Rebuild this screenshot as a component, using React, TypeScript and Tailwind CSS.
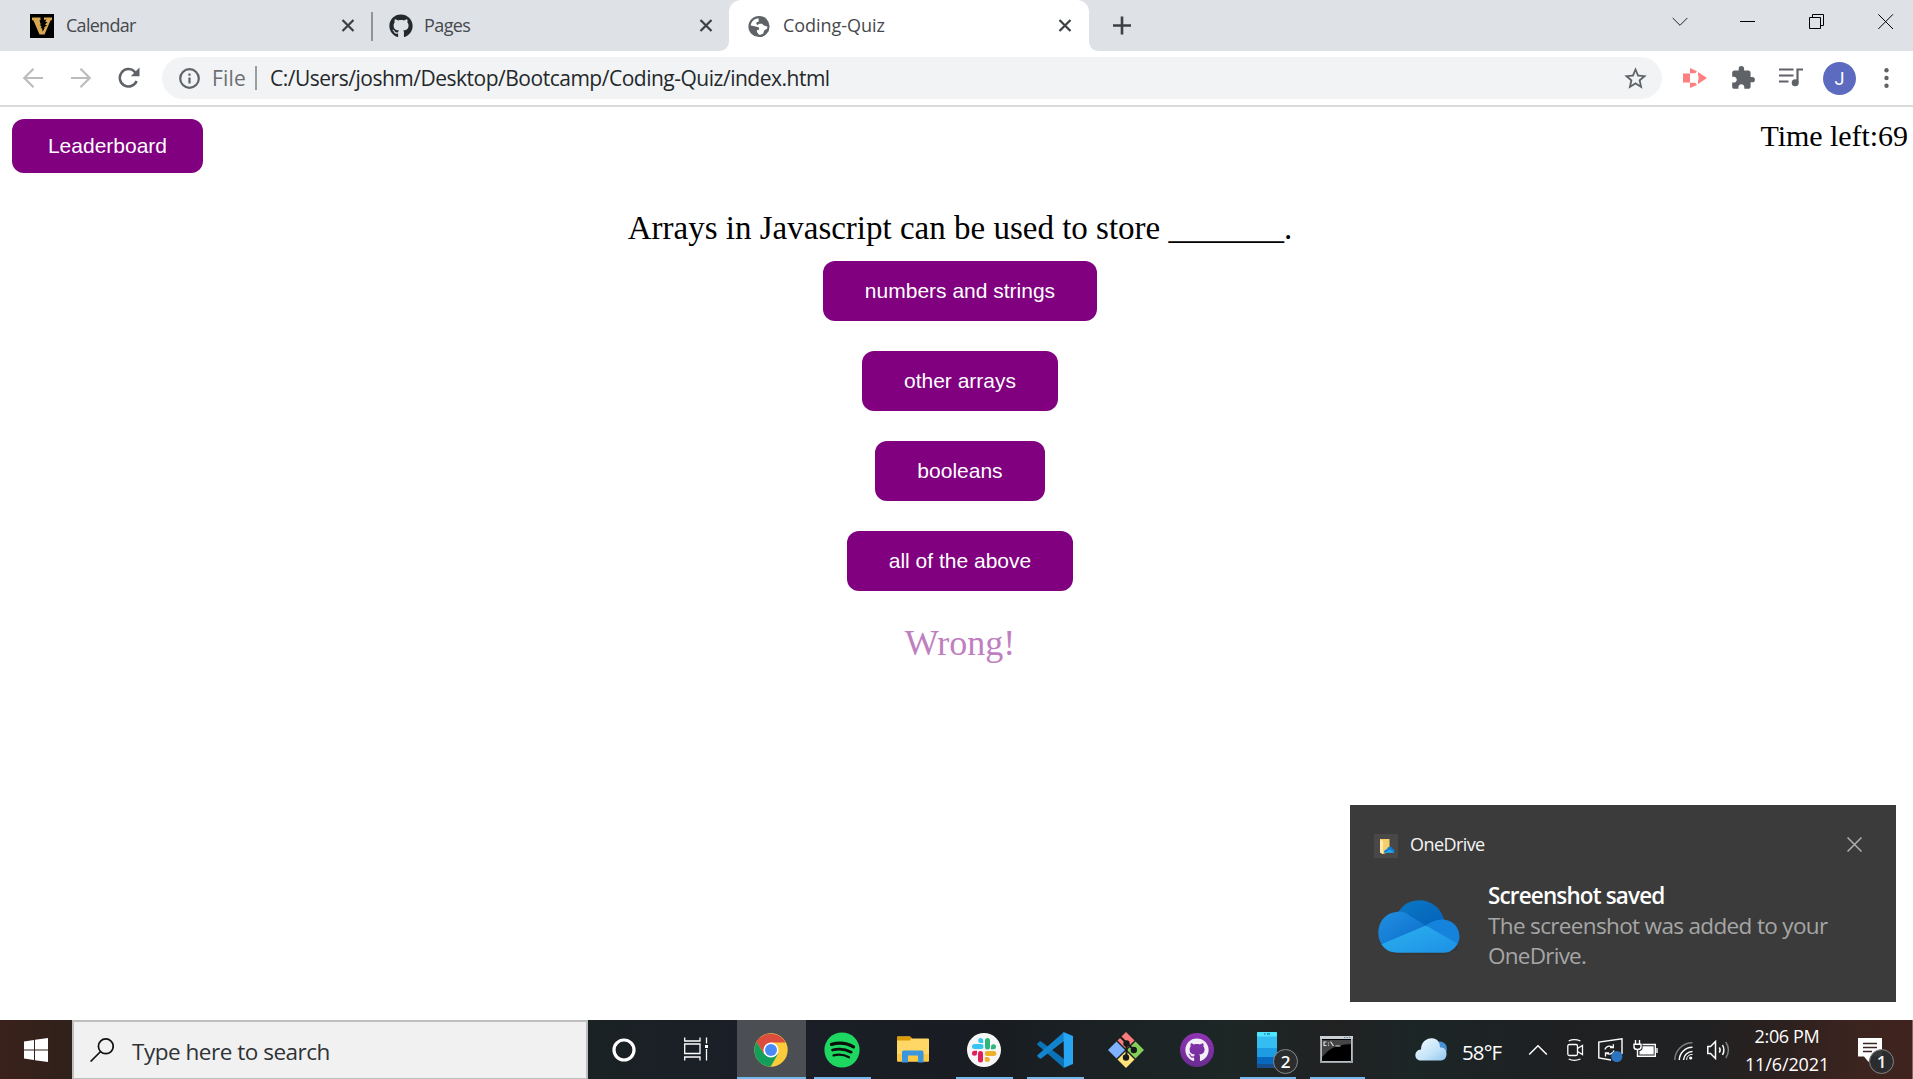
import type { ReactNode } from "react";
import { FaGithub } from "react-icons/fa";
import { MdExtension, MdStarBorder } from "react-icons/md";

const UI = "font-['Open_Sans','Noto_Sans',sans-serif]";

function CloseGlyph() {
  return (
    <svg className="h-3.5 w-3.5 shrink-0" viewBox="0 0 14 14" stroke="#3c4043" strokeWidth="2.2" fill="none">
      <path d="M1.5 1 12.5 12M12.5 1 1.5 12" />
    </svg>
  );
}

function VFavicon() {
  return (
    <svg className="h-6 w-6 shrink-0" viewBox="0 0 24 24">
      <rect width="24" height="24" fill="#000" />
      <path d="M2 3.500H10.500V6L9.500 6.500 13 17 14.500 14 13 12.500 15 12 13.500 9.500 16 9.500 15 6.500 14 5.500V3.500H22V6L20.500 6.500 14.500 20.500H9.500L3.500 6.500 2 6Z" fill="#d8a851" />
      <path d="M12.500 3.500 11 6 12.500 7.500 10 8.500 12 10 9.500 11 12 12.500 10.500 14 12.500 14.500 12.500 18 14.500 13 17 11.500 15 10.500 17.500 8 15 8 16.500 5.500 14 6Z" fill="#000" />
    </svg>
  );
}

function GlobeFavicon() {
  return (
    <svg className="h-6 w-6 shrink-0" viewBox="0 0 24 24">
      <circle cx="12" cy="12.500" r="10.600" fill="#5f6368" />
      <path d="M11.500 4.300C7.500 4.500 4.200 7.500 3.700 11.500L7.500 12.300 11.500 13.200 12 15.500 9.800 16 9.800 18 12 20.700C13.500 20.700 15 20.200 16.200 19.400L17.200 16.500 20.200 14.500 20.300 12.500 17 11.500 15 9.800 12.300 9.800 10.500 11 9.300 10 9.600 8.300 11.800 7.600Z" fill="#fff" />
      <path d="M4 13.500 8 13.800 11.500 13.200 12 15.500 9.800 16 9.800 18 11 20.500 5.800 18Z" fill="#5f6368" />
    </svg>
  );
}

function TabStrip() {
  return (
    <div className={`flex h-[51px] bg-[#dee1e6] text-[18px] leading-6 text-[#45494d] ${UI}`}>
      <div className="flex w-[371px] items-center pr-[16px] pl-[30px]">
        <VFavicon />
        <span className="mb-[2px] ml-[12px] flex-1 tracking-[-0.72px]">Calendar</span>
        <CloseGlyph />
      </div>
      <div className="mt-3 h-[29px] w-[2px] bg-[#909397]" />
      <div className="flex w-[356px] items-center pr-[16px] pl-[16px]">
        <FaGithub className="h-6 w-6 text-[#24292e]" />
        <span className="mb-[2px] ml-[11px] flex-1 tracking-[-0.6px]">Pages</span>
        <CloseGlyph />
      </div>
      <div className="relative flex w-[360px] items-center rounded-t-xl bg-white pr-[17px] pl-[18px]">
        <svg className="absolute bottom-0 -left-2.5 h-2.5 w-2.5" viewBox="0 0 10 10">
          <path d="M10 0V10H0C6 10 10 6 10 0Z" fill="#fff" />
        </svg>
        <svg className="absolute -right-2.5 bottom-0 h-2.5 w-2.5" viewBox="0 0 10 10">
          <path d="M0 0V10H10C4 10 0 6 0 0Z" fill="#fff" />
        </svg>
        <GlobeFavicon />
        <span className="mb-[2px] ml-[12px] flex-1 tracking-[-0.05px]">Coding-Quiz</span>
        <CloseGlyph />
      </div>
      <svg className="mt-4 ml-[23px] h-[19px] w-[20px]" viewBox="0 0 20 19" stroke="#3c4043" strokeWidth="2.600">
        <path d="M1 9.500H19M10 .5V18.500" />
      </svg>
      <div className="flex-1" />
      <div className="flex items-start pt-3.5 pr-[19px]">
        <svg className="h-4 w-4" viewBox="0 0 16 16" fill="none" stroke="#222">
          <path d="M.7 4 8 11.300 15.300 4" />
        </svg>
        <svg className="ml-[52px] h-4 w-4" viewBox="0 0 16 16" stroke="#000">
          <path d="M0 7.500H15" />
        </svg>
        <svg className="ml-[53px] h-4 w-4" viewBox="0 0 16 16" fill="none" stroke="#000">
          <path d="M.5 3.500H11.500V14.500H.5ZM3.500 3.500V.5H14.500V11.500H11.500" />
        </svg>
        <svg className="ml-[53px] h-4 w-4" viewBox="0 0 16 16" fill="none" stroke="#000">
          <path d="M.3 .3 15 15M15 .3 .3 15" />
        </svg>
      </div>
    </div>
  );
}

function Toolbar() {
  return (
    <div className={`flex h-14 items-center border-b-2 border-[#dadadb] bg-white ${UI}`}>
      <svg className="ml-[22px] h-[22px] w-[22px]" viewBox="0 0 22 22" fill="none" stroke="#babcbe" strokeWidth="2.200">
        <path d="M21 11H2.500M11.500 1.800 2.300 11 11.500 20.200" />
      </svg>
      <svg className="ml-[26px] h-[22px] w-[22px]" viewBox="0 0 22 22" fill="none" stroke="#babcbe" strokeWidth="2.200">
        <path d="M1 11H19.500M10.500 1.800 19.700 11 10.500 20.200" />
      </svg>
      <svg className="ml-[26px] h-[22px] w-[22px]" viewBox="0 0 22 22">
        <path d="M18.600 14A8.700 8.700 0 1 1 16.800 4.800L18 6" fill="none" stroke="#5f6368" strokeWidth="2.500" />
        <path d="M21.500 .6V9.200H12.800Z" fill="#5f6368" />
      </svg>
      <div className="ml-[22px] flex h-[42px] w-[1500px] items-center rounded-full bg-[#f1f3f4] pr-[13px] pl-[17px] text-[21px] leading-7">
        <svg className="h-[21px] w-[21px]" viewBox="0 0 21 21">
          <circle cx="10.500" cy="10.500" r="9.300" fill="none" stroke="#5f6368" strokeWidth="2.200" />
          <path d="M9.400 9.500H11.600V15.500H9.400ZM9.400 5.500H11.600V7.700H9.400Z" fill="#5f6368" />
        </svg>
        <span className="ml-[12px] w-[43px] tracking-[0.15px] text-[#6b6f74]">File</span>
        <div className="h-6 w-[2px] bg-[#9a9da1]" />
        <span className="ml-[13px] flex-1 tracking-[-0.49px] text-[#25282b]">
          C:/Users/joshm/Desktop/Bootcamp/Coding-Quiz/index.html
        </span>
        <MdStarBorder className="h-[27px] w-[27px] text-[#5f6368]" />
      </div>
      <svg className="ml-[21px] h-5 w-6" viewBox="0 0 24 20" fill="#ff7f7f">
        <path d="M0 5.500H7V14.500H0ZM7 0 14 3.200 12 5.500H7ZM15 4 24 10 15 16ZM7 20V14.500H12L14 17ZM8 6.500V13.500H7V6.500Z" />
        <path d="M7 5.500H13.500L15.500 8V12L13.500 14.500H7Z" fill="#fff" />
      </svg>
      <MdExtension className="ml-[23px] h-[26px] w-[26px] text-[#5f6368]" />
      <svg className="ml-[23px] h-[22px] w-6" viewBox="0 0 24 22" fill="none" stroke="#5f6368" strokeWidth="2.200">
        <path d="M0 2.500H14.500M0 8.500H14.500M0 14.500H9.500M18.500 15.500V2.500H24" />
        <circle cx="16.200" cy="15.800" r="3.500" fill="#5f6368" stroke="none" />
      </svg>
      <div className="ml-[20px] flex h-[33px] w-[33px] items-center justify-center rounded-full bg-[#5c6bc0] font-['Roboto',sans-serif] text-[18px] text-white">
        J
      </div>
      <svg className="ml-[28px] h-5 w-[5px]" viewBox="0 0 5 20" fill="#5f6368">
        <circle cx="2.500" cy="2.200" r="2.200" />
        <circle cx="2.500" cy="10" r="2.200" />
        <circle cx="2.500" cy="17.800" r="2.200" />
      </svg>
    </div>
  );
}

const answers = ["numbers and strings", "other arrays", "booleans", "all of the above"];

function Quiz() {
  return (
    <main className="flex-1 bg-white font-['Liberation_Serif',serif] text-black">
      <div className="flex h-[102px] items-start justify-between pt-3 pr-[5px] pl-3">
        <button className="h-[54px] w-[191px] rounded-xl bg-[purple] font-['Liberation_Sans',sans-serif] text-[21px] leading-6 text-white">
          Leaderboard
        </button>
        <span className="text-[30px] leading-[34px] tracking-[-0.05px]">Time left:69</span>
      </div>
      <div className="flex flex-col items-center pl-[7px]">
        <p className="text-[33px] leading-[38px]">Arrays in Javascript can be used to store _______.</p>
        <div className="mt-[14px] flex flex-col items-center gap-[30px]">
          {answers.map((a) => (
            <button
              key={a}
              className="h-[60px] rounded-xl bg-[purple] px-[42px] font-['Liberation_Sans',sans-serif] text-[21px] leading-6 text-white"
            >
              {a}
            </button>
          ))}
        </div>
        <p className="mt-[31px] text-[36px] leading-[42px] text-[#c080c0]">Wrong!</p>
      </div>
    </main>
  );
}

function Toast() {
  return (
    <div className={`absolute right-[17px] bottom-[77px] h-[197px] w-[546px] bg-[#3b3b3b] ${UI}`}>
      <div className="flex h-[76px] items-center pt-[6px] pr-[34px] pl-6">
        <svg className="h-6 w-6" viewBox="0 0 24 24">
          <rect width="24" height="24" fill="#4a4846" />
          <path d="M6 5H15.500V18L9 20 6 18.500Z" fill="#f5cf6b" />
          <path d="M6 5 9 7V20L6 18.500Z" fill="#fde9a9" />
          <path d="M10 18.800C10 16 12 15.500 13 15.300 13.500 12 18 12 18.700 15 21 15 21 18.800 19 18.800Z" fill="#0f7fd4" />
          <path d="M10.500 18.800 16 15.800 20 18.500 19 18.800Z" fill="#29a9ea" />
        </svg>
        <span className="-mt-[4px] ml-[12px] flex-1 text-[18px] leading-6 tracking-[-0.58px] text-[#f5f5f5]">OneDrive</span>
        <svg className="-mt-[4px] h-[15px] w-[15px]" viewBox="0 0 15 15" stroke="#b0b0b0" strokeWidth="1.500">
          <path d="M.5 .5 14.500 14.500M14.500 .5 .5 14.500" />
        </svg>
      </div>
      <div className="flex pl-[28px]">
        <svg className="mt-[19px] h-14 w-[82px]" viewBox="0 0 83 56">
          <defs>
            <linearGradient id="cloudBack" x1="0" y1="0" x2="1" y2="1">
              <stop offset="0" stopColor="#0a78c4" />
              <stop offset="1" stopColor="#0460b8" />
            </linearGradient>
            <linearGradient id="cloudLeft" x1="0" y1="0" x2="1" y2="1">
              <stop offset="0" stopColor="#2090e0" />
              <stop offset="1" stopColor="#0c6ccc" />
            </linearGradient>
            <linearGradient id="cloudFront" x1="0" y1="0" x2="1" y2="1">
              <stop offset="0" stopColor="#2cb2ee" />
              <stop offset="1" stopColor="#1c90e6" />
            </linearGradient>
          </defs>
          <path d="M17 54.500H67L80 50V45L3 45Z" fill="#2e2e2e" opacity=".5" />
          <path d="M20 13C25 4 33 0 42 0 54 0 64 8 67 20L49 30Z" fill="url(#cloudBack)" />
          <path d="M20.500 11.500C25 11 29 13 33 16L49 26 4 45C-2 36 0 25 5 19 9 14 14 12 20.500 11.500Z" fill="url(#cloudLeft)" />
          <path d="M48.500 25.500C53 22 59 19.500 66 19.500 75 20 82.500 27 82.500 37 82.500 40 81 43 80 45L64 45Z" fill="#1583dc" />
          <path d="M3.500 44.500 48.500 25.500 80.500 44C78 49 73 53 67 53H20C12 53 7 50 3.500 44.500Z" fill="url(#cloudFront)" />
        </svg>
        <div className="ml-[28px] text-[22.500px] leading-[30px] text-[#a6a6a6]">
          <p className="font-semibold tracking-[-0.86px] text-white">Screenshot saved</p>
          <p className="tracking-[-0.65px]">The screenshot was added to your</p>
          <p className="tracking-[-0.75px]">OneDrive.</p>
        </div>
      </div>
    </div>
  );
}

function Slot({ children, open, active }: { children: ReactNode; open?: boolean; active?: boolean }) {
  return (
    <div className={`relative flex w-[71px] items-center justify-center ${active ? "bg-[#4b4e52]" : ""}`}>
      {children}
      {open && <div className={`absolute bottom-0 h-[2px] bg-[#76b9ed] ${active ? "inset-x-0" : "right-[6px] left-[8px]"}`} />}
    </div>
  );
}

function CountBadge({ children }: { children: ReactNode }) {
  return (
    <span className="flex h-[25px] w-[25px] items-center justify-center rounded-full border border-[#8a8a8a] bg-[#2b2d2e] text-[17px] leading-none font-semibold text-white">
      {children}
    </span>
  );
}

function ChromeIcon() {
  return (
    <svg className="-ml-[2px] h-[34px] w-[34px]" viewBox="0 0 34 34">
      <circle cx="17" cy="17" r="16.700" fill="#fccb3b" />
      <path d="M2.500 8.700A16.700 16.700 0 0 1 31.500 9.500H17L9.500 20Z" fill="#db4b3e" />
      <path d="M2.500 8.700A16.700 16.700 0 0 0 16.500 33.700L24 21 17 24 10 21Z" fill="#139f5b" />
      <circle cx="17" cy="17" r="7.600" fill="#fff" />
      <circle cx="17" cy="17" r="6" fill="#4a8af4" />
    </svg>
  );
}

function SpotifyIcon() {
  return (
    <svg className="h-9 w-9" viewBox="0 0 36 36" fill="none" stroke="#0c0f0c" strokeLinecap="round">
      <circle cx="18" cy="18" r="17.600" fill="#1ed760" stroke="none" />
      <path d="M7.500 12.300C15 10.200 23 11 29.500 14.800" strokeWidth="3.300" />
      <path d="M8.500 18C15 16.200 21.500 17 27.200 20.200" strokeWidth="2.700" />
      <path d="M9.500 23.400C15 22 20 22.500 25 25.300" strokeWidth="2.200" />
    </svg>
  );
}

function ExplorerIcon() {
  return (
    <svg className="h-[27px] w-8" viewBox="0 0 32 27">
      <path d="M0 1.500Q0 .5 1 .5H13L15 2.500H31Q32 2.500 32 3.500V24.500Q32 25.500 31 25.500H1Q0 25.500 0 24.500Z" fill="#ffd766" />
      <path d="M0 1.500Q0 .5 1 .5H13L14.500 2 13 4.500H0Z" fill="#dd9b07" />
      <path d="M0 18H32V24.500Q32 25.500 31 25.500H1Q0 25.500 0 24.500Z" fill="#fbc944" />
      <path d="M5 26.500V16Q5 14.500 6.500 14.500H25Q26.500 14.500 26.500 16V26.500H21V19.500H11V26.500Z" fill="#3a96dd" />
    </svg>
  );
}

function SlackIcon() {
  return (
    <svg className="h-[34px] w-[34px]" viewBox="0 0 34 34">
      <circle cx="17" cy="17" r="17" fill="#f6f6f6" />
      <g fill="#36c5f0">
        <rect x="5" y="11" width="11.500" height="5" rx="2.500" />
        <path d="M13.700 5A2.500 2.500 0 0 1 16.200 7.500V10H13.700A2.500 2.500 0 0 1 13.700 5Z" />
      </g>
      <g fill="#2eb67d">
        <rect x="18" y="5" width="5" height="11.500" rx="2.500" />
        <path d="M29 13.700A2.500 2.500 0 0 1 26.500 16.200H24V13.700A2.500 2.500 0 0 1 29 13.700Z" />
      </g>
      <g fill="#ecb22e">
        <rect x="17.800" y="18" width="11.500" height="5" rx="2.500" />
        <path d="M20.300 29A2.500 2.500 0 0 1 17.800 26.500V24H20.300A2.500 2.500 0 0 1 20.300 29Z" />
      </g>
      <g fill="#e01e5a">
        <rect x="11" y="18" width="5" height="11.500" rx="2.500" />
        <path d="M5 20.300A2.500 2.500 0 0 1 7.500 17.800H10V20.300A2.500 2.500 0 0 1 5 20.300Z" />
      </g>
    </svg>
  );
}

function CodeIcon() {
  return (
    <svg className="h-9 w-9" viewBox="0 0 36 36">
      <path d="M.5 11.200 2.500 9.600Q3.500 9 4.500 9.700L27 27V36L.6 13Q-.3 12 .5 11.200Z" fill="#0b73b8" />
      <path d="M.5 24.500 2.500 26.300Q3.500 27 4.500 26.300L27 9V0L.6 23Q-.3 23.800 .5 24.500Z" fill="#1284cd" />
      <path d="M26.500 0 36 4V32L26.500 36 27 35Z" fill="#27a4f2" />
    </svg>
  );
}

function GitIcon() {
  return (
    <svg className="h-9 w-9" viewBox="0 0 36 36">
      <path d="M18 0 26.500 8.500 18 17 9.500 8.500Z" fill="#f87c7c" />
      <path d="M27.500 9.500 36 18 27.500 26.500 19 18Z" fill="#86cf58" />
      <path d="M8.500 9.500 17 18 8.500 26.500 0 18Z" fill="#80b3ff" />
      <path d="M18 19 26.500 27.500 18 36 9.500 27.500Z" fill="#ffe27a" />
      <path d="M12 4.500 18.500 11V25M18.500 11 26 18" stroke="#16181a" strokeWidth="2" fill="none" />
      <circle cx="18.500" cy="11.500" r="3.200" fill="#16181a" />
      <circle cx="18" cy="25.500" r="3.200" fill="#16181a" />
      <circle cx="25.800" cy="18" r="3.200" fill="#16181a" />
    </svg>
  );
}

function PhoneIcon() {
  return (
    <svg className="h-9 w-5" viewBox="0 0 20 36">
      <rect width="20" height="36" rx="1" fill="#35bdf1" />
      <path d="M0 1Q0 0 1 0H19Q20 0 20 1V4.500H0Z" fill="#50e6ff" />
      <path d="M7 2H8.500M10 2H13" stroke="#0c59a4" strokeWidth="1.200" />
      <path d="M0 16H20V25H0Z" fill="#1d9ce3" />
      <path d="M0 25H20V32H0Z" fill="#0669bd" />
      <path d="M0 32H20V35Q20 36 19 36H1Q0 36 0 35Z" fill="#184e8c" />
    </svg>
  );
}

function TerminalIcon() {
  return (
    <svg className="h-[27px] w-[33px]" viewBox="0 0 33 27">
      <rect x=".5" y=".5" width="32" height="26" fill="#000" stroke="#9aa2a8" />
      <rect x="0" y="0" width="33" height="3" fill="#c9d0d5" />
      <path d="M24 1.500H31" stroke="#69839b" strokeDasharray="1.500 1" />
      <path d="M2 4H31V8Q14 9 8 15L2 21Z" fill="#444" />
      <path d="M6.500 6H4V9.500H6.500M8.500 6.500V7.500M8.500 8.700V9.700M10.500 5.500 13.500 10M15.500 10H20.500" fill="none" stroke="#dedede" strokeWidth="1.200" />
      <path d="M1.500 3V25.500H31.500V3" fill="none" stroke="#b8bfc4" />
    </svg>
  );
}

function Tray() {
  return (
    <div className="flex flex-1 items-center text-white">
      <svg className="ml-[44px] h-[23px] w-8" viewBox="0 0 32 23">
        <defs>
          <linearGradient id="weather" x1="0" y1="0" x2="1" y2="1">
            <stop offset="0" stopColor="#f4fbff" />
            <stop offset=".6" stopColor="#c3e3f8" />
            <stop offset="1" stopColor="#8fc6ee" />
          </linearGradient>
        </defs>
        <path d="M19 5Q27 1 31 7Q33 12 30 17L20 15Z" fill="#4a92d8" />
        <path d="M6 22.500C-1.500 22.500-1.500 12 6 11.500 6 3 13 0 17 .3 22 .5 25 4 25 9.500 33 8 34 22.500 26 22.500Z" fill="url(#weather)" />
      </svg>
      <span className="mt-[5px] ml-[15px] w-[52px] text-[20.5px] leading-7 tracking-[-0.9px]">58°F</span>
      <svg className="ml-[14px] h-3 w-5" viewBox="0 0 20 12" fill="none" stroke="#fff" strokeWidth="1.500">
        <path d="M1.200 10.500 10 1.700 18.800 10.500" />
      </svg>
      <svg className="ml-[19px] h-6 w-[17px]" viewBox="0 0 17 24" fill="none" stroke="#fff" strokeWidth="1.300">
        <path d="M1.700 3Q7 .2 13.500 3M1.700 21Q7 23.800 13.500 21" />
        <rect x=".8" y="6.500" width="9.700" height="11" rx="1.500" />
        <path d="M10.500 10.500 15.500 7.500V16.500L10.500 13.500" />
      </svg>
      <svg className="ml-[14px] h-6 w-[25px]" viewBox="0 0 25 24" fill="none" stroke="#fff" strokeWidth="1.400">
        <path d="M13 22 .8 20V4L24 .8V16" />
        <path d="M6.800 11.500Q9 6.500 14.500 9M15.300 6.300V9.700H12M16 12.500Q14 17.500 8.500 15.500M7.500 18.500V15H11" strokeWidth="1.300" />
        <circle cx="18.800" cy="18.500" r="5.600" fill="#2d74c0" stroke="none" />
      </svg>
      <svg className="-mt-[2px] ml-[10px] h-[18px] w-[25px]" viewBox="0 0 25 18" fill="none" stroke="#fff" strokeWidth="1.400">
        <path d="M2.500 0V4M6.500 0V4M1 4.200H8V7Q8 9.500 4.500 9.500 1 9.500 1 7ZM4.500 9.500V16.300H22.300V4.500H9.500M24 8V13" />
        <path d="M9.500 6.300H20.700V14.600H6.500V11Q9.500 10.500 9.500 8Z" fill="#fff" stroke="none" />
      </svg>
      <svg className="mt-[3px] ml-[16px] h-[18px] w-[19px]" viewBox="0 0 19 18" fill="none" strokeWidth="1.500">
        <path d="M.8 18A17.500 17.500 0 0 1 18.500 .8" stroke="#7c7e7f" />
        <path d="M5.300 18A13 13 0 0 1 18.500 5.300M9.500 18A9 9 0 0 1 18.500 9.500" stroke="#fff" />
        <path d="M12.700 18A5 5 0 0 1 18.500 12.500" stroke="#fff" strokeWidth="1" />
        <circle cx="16.700" cy="16" r="1.600" fill="#fff" />
      </svg>
      <svg className="ml-[14px] h-5 w-[23px]" viewBox="0 0 23 20" fill="none" stroke="#fff" strokeWidth="1.500">
        <path d="M.8 6.500H3.500L8.500 1.500V18.500L3.500 13.500H.8Z" />
        <path d="M12.300 7.500Q14 10 12.300 12.500M15.500 5Q18.300 10 15.500 15" />
        <path d="M18.800 2Q24 10 18.800 18" stroke="#7c7e7f" />
      </svg>
      <div className="ml-[15px] flex w-[84px] flex-col items-center text-[18px] leading-7">
        <span className="tracking-[-0.35px]">2:06 PM</span>
        <span className="tracking-[-0.12px]">11/6/2021</span>
      </div>
      <div className="relative ml-[29px]">
        <svg className="h-6 w-6" viewBox="0 0 24 24">
          <path d="M0 0H24V18.500H12.500L10.500 24 6 18.500H0Z" fill="#fff" />
          <path d="M5 5.500H19M5 9.500H19M5 13.500H14" stroke="#3a2621" strokeWidth="1.300" />
        </svg>
        <div className="absolute top-[11px] left-[11px] opacity-95">
          <CountBadge>1</CountBadge>
        </div>
      </div>
      <div className="flex-1" />
      <div className="h-full w-px bg-[#7d6b66]" />
    </div>
  );
}

function Taskbar() {
  return (
    <div
      className={`flex h-[59px] bg-[linear-gradient(90deg,#3b211b_0,#2f211b_72px,#1a2224_588px,#1b1e27_740px,#191d22_1000px,#1d2726_1230px,#212122_1340px,#1c2627_1410px,#1e2022_1550px,#202122_1700px,#2b211f_1780px,#3b241f_1850px,#40231e_1913px)] ${UI}`}
    >
      <div className="flex w-[72px] items-center justify-center">
        <svg className="h-6 w-6" viewBox="0 0 24 24" fill="#fff">
          <path d="M0 3.500 10 2V11.500H0ZM11 1.800 24 0V11.500H11ZM0 12.500H10V22L0 20.500ZM11 12.500H24V24L11 22.200Z" />
        </svg>
      </div>
      <div className="flex w-[516px] items-center border-2 border-b-[1px] border-[#bfbfbf] bg-[#f1f1f1] pl-4">
        <svg className="h-6 w-6" viewBox="0 0 24 24" fill="none" stroke="#111" strokeWidth="1.700">
          <circle cx="15.800" cy="8.300" r="7.400" />
          <path d="M10.600 13.500 .6 23.500" />
        </svg>
        <span className="mt-[4px] ml-[18px] text-[22.500px] leading-[30px] tracking-[-0.48px] text-[#2f3236]">Type here to search</span>
      </div>
      <Slot>
        <svg className="h-6 w-6" viewBox="0 0 24 24">
          <circle cx="12" cy="12" r="10" fill="none" stroke="#fff" strokeWidth="3.200" />
        </svg>
      </Slot>
      <div className="flex w-[78px] items-center justify-center pr-1">
        <svg className="mt-[-1px] h-6 w-6" viewBox="0 0 24 24" fill="none" stroke="#fff" strokeWidth="1.300">
          <path d="M.7 .5V4H16V.5M.7 7H16V16.500H.7ZM.7 23.500V20H16V23.500M22.500 .5V6.500M22.500 12V23.500" />
          <path d="M21 8H24V11H21Z" fill="#fff" stroke="none" />
        </svg>
      </div>
      <div className="flex w-[69px]">
        <Slot open active>
          <ChromeIcon />
        </Slot>
      </div>
      <Slot open>
        <SpotifyIcon />
      </Slot>
      <Slot>
        <ExplorerIcon />
      </Slot>
      <Slot open>
        <SlackIcon />
      </Slot>
      <Slot open>
        <CodeIcon />
      </Slot>
      <Slot>
        <GitIcon />
      </Slot>
      <Slot>
        <div className="flex h-[34px] w-[34px] items-center justify-center rounded-full bg-[linear-gradient(#8f34b4,#6a2c91)]">
          <FaGithub className="h-6 w-6 text-[#f4eef8]" />
        </div>
      </Slot>
      <div className="flex w-[70px]">
        <Slot open>
          <PhoneIcon />
          <div className="absolute top-[29px] left-[41px]">
            <CountBadge>2</CountBadge>
          </div>
        </Slot>
      </div>
      <div className="flex w-[69px]">
        <Slot open>
          <TerminalIcon />
        </Slot>
      </div>
      <Tray />
    </div>
  );
}

export default function App() {
  return (
    <div className="relative flex h-[1079px] w-[1913px] flex-col overflow-hidden">
      <TabStrip />
      <Toolbar />
      <Quiz />
      <Toast />
      <Taskbar />
    </div>
  );
}
